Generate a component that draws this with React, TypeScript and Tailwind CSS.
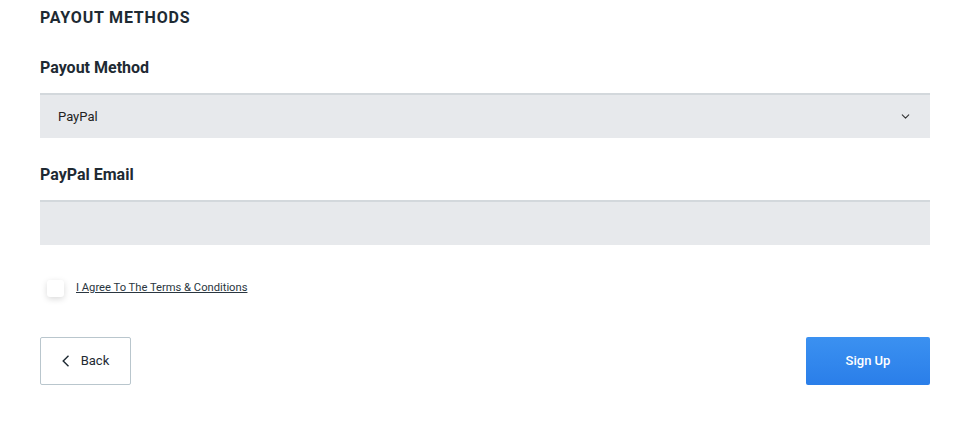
import { ChevronDown } from "lucide-react";

export default function App() {
  return (
    <div className="min-h-screen bg-white font-['Roboto',sans-serif] text-[#1e2a33]">
      <div className="ml-10 w-[890px] pt-[6px]">
        <h2 className="text-[16px] font-bold leading-6 tracking-[0.05em] uppercase">
          Payout Methods
        </h2>

        {/* Payout method select */}
        <div className="mt-[26px]">
          <label className="block text-[16px] font-bold leading-6">Payout Method</label>
          <div className="mt-[13px] flex h-[45px] items-center justify-between border-t-2 border-[#d3d8dc] bg-[#e7e9ec] pl-[18px] pr-[18px]">
            <span className="text-[13px] text-[#222]">PayPal</span>
            <ChevronDown size={13} strokeWidth={2} className="text-[#333]" />
          </div>
        </div>

        {/* PayPal email */}
        <div className="mt-[25px]">
          <label className="block text-[16px] font-bold leading-6">PayPal Email</label>
          <div className="mt-[13px] h-[45px] border-t-2 border-[#d3d8dc] bg-[#e7e9ec]" />
        </div>

        {/* Terms */}
        <div className="mt-[35px] flex items-center gap-3 pl-[7px]">
          <span className="h-[17px] w-[17px] rounded-[3px] bg-white shadow-[0_2px_6px_rgba(0,0,0,0.15)]" />
          <a className="text-[11.2px] text-[#2a3640] underline">I Agree To The Terms &amp; Conditions</a>
        </div>

        {/* Actions */}
        <div className="mt-[40px] flex items-center justify-between">
          <button className="flex h-12 w-[91px] items-center justify-center gap-[11px] rounded-[2px] border border-[#b9c6cd] bg-white text-[13px] text-[#1e2a33]">
            <svg width="8" height="12" viewBox="0 0 8 12" fill="none" stroke="currentColor" strokeWidth="1.4">
              <polyline points="6.5,0.8 1.2,6 6.5,11.2" />
            </svg>
            <span>Back</span>
          </button>
          <button className="h-12 w-[124px] rounded-[2px] bg-gradient-to-b from-[#3b91f1] to-[#2a7ee9] text-[13px] font-medium text-white">
            Sign Up
          </button>
        </div>
      </div>
    </div>
  );
}
